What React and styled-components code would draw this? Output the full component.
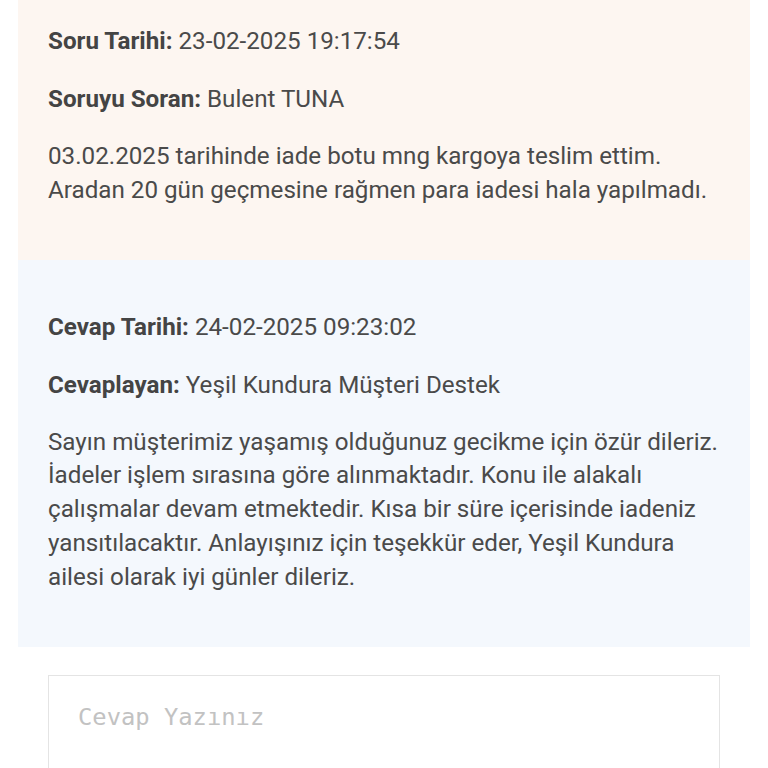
import styled, { createGlobalStyle } from "styled-components";

const GlobalStyle = createGlobalStyle`
  body {
    margin: 0;
    background: #ffffff;
    font-family: Roboto, "Noto Sans", Arial, sans-serif;
  }
`;

const question = {
  date: "23-02-2025 19:17:54",
  author: "Bulent TUNA",
  lines: [
    "03.02.2025 tarihinde iade botu mng kargoya teslim ettim.",
    "Aradan 20 gün geçmesine rağmen para iadesi hala yapılmadı.",
  ],
};

const answer = {
  date: "24-02-2025 09:23:02",
  author: "Yeşil Kundura Müşteri Destek",
  lines: [
    "Sayın müşterimiz yaşamış olduğunuz gecikme için özür dileriz.",
    "İadeler işlem sırasına göre alınmaktadır. Konu ile alakalı",
    "çalışmalar devam etmektedir. Kısa bir süre içerisinde iadeniz",
    "yansıtılacaktır. Anlayışınız için teşekkür eder, Yeşil Kundura",
    "ailesi olarak iyi günler dileriz.",
  ],
};

const App = () => {
  return (
    <>
      <GlobalStyle />
      <Page>
        <Panel tone="question" top={24}>
          <Meta><b>Soru Tarihi:</b> {question.date}</Meta>
          <Meta><b>Soruyu Soran:</b> {question.author}</Meta>
          <Body>
            {question.lines.map((l, i) => (
              <span key={i}>{l}<br /></span>
            ))}
          </Body>
        </Panel>
        <Panel tone="answer" top={50}>
          <Meta><b>Cevap Tarihi:</b> {answer.date}</Meta>
          <Meta><b>Cevaplayan:</b> {answer.author}</Meta>
          <Body>
            {answer.lines.map((l, i) => (
              <span key={i}>{l}<br /></span>
            ))}
          </Body>
        </Panel>
        <ReplyArea>
          <ReplyBox placeholder="Cevap Yazınız" />
        </ReplyArea>
      </Page>
    </>
  );
};

export default App;

const Page = styled.div`
  display: flex;
  flex-direction: column;
  padding: 0 18px;
`;

const Panel = styled.section`
  background: ${(p) => (p.tone === "question" ? "#fdf6f1" : "#f4f8fd")};
  padding: ${(p) => p.top}px 30px 28px;
`;

const Meta = styled.p`
  margin: 0 0 24px;
  font-size: 24.2px;
  line-height: 34px;
  color: #4a4a4a;
  b {
    font-weight: 700;
    color: #444;
  }
`;

const Body = styled.p`
  margin: 0 0 24px;
  font-size: 24.2px;
  line-height: 33.8px;
  color: #4a4a4a;
`;

const ReplyArea = styled.div`
  padding: 28px 30px 0;
`;

const ReplyBox = styled.textarea`
  display: block;
  box-sizing: border-box;
  width: 100%;
  height: 160px;
  border: 1px solid #e4e4e4;
  border-radius: 0;
  padding: 27px 29px;
  font-family: "DejaVu Sans Mono", monospace;
  font-size: 23.8px;
  line-height: 28px;
  color: #444;
  resize: none;
  outline: none;
  &::placeholder {
    color: #c2c2c2;
  }
`;
